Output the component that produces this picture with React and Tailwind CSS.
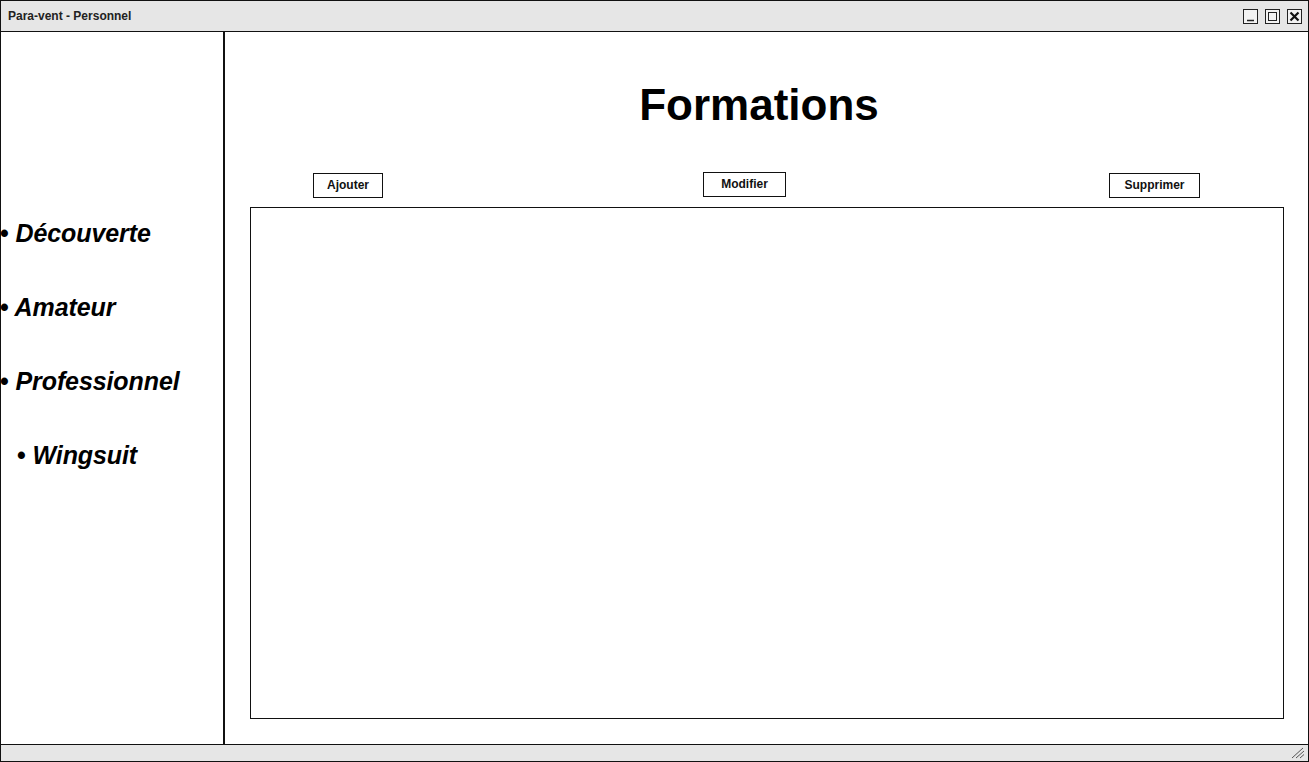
import React from 'react';

const sections = [
    { label: 'Découverte', indent: false },
    { label: 'Amateur', indent: false },
    { label: 'Professionnel', indent: false },
    { label: 'Wingsuit', indent: true },
];

const WinButton = ({ children }) => (
    <div className="w-[15px] h-[15px] border border-[#222] bg-[#f2f2f2] flex items-center justify-center">
        {children}
    </div>
);

const App = () => {
    return (
        <div className="w-[1309px] h-[762px] border border-[#111] bg-white flex flex-col text-black" style={{ fontFamily: '"Liberation Sans", Arial, sans-serif' }}>
            {/* Title bar */}
            <div className="h-[31px] shrink-0 border-b border-[#111] bg-[#e6e6e6] flex items-center justify-between pl-[7px] pr-[6px]">
                <span className="text-[12px] font-bold text-[#222]">Para-vent - Personnel</span>
                <div className="flex items-center gap-[7px]">
                    <WinButton>
                        <svg width="13" height="13" viewBox="0 0 13 13">
                            <path d="M3 10.5h7" stroke="#222" strokeWidth="1.5" />
                        </svg>
                    </WinButton>
                    <WinButton>
                        <svg width="13" height="13" viewBox="0 0 13 13">
                            <rect x="2.5" y="2.5" width="8" height="8" fill="none" stroke="#222" strokeWidth="1" />
                        </svg>
                    </WinButton>
                    <WinButton>
                        <svg width="13" height="13" viewBox="0 0 13 13">
                            <path d="M2.5 2.5l8 8M10.5 2.5l-8 8" stroke="#111" strokeWidth="2.2" />
                        </svg>
                    </WinButton>
                </div>
            </div>

            {/* Body */}
            <div className="flex-1 flex min-h-0">
                {/* Sidebar */}
                <div className="w-[224px] shrink-0 border-r-2 border-[#111] pt-[164px]">
                    {sections.map((s) => (
                        <div
                            key={s.label}
                            className={`text-[25px] leading-[74px] font-bold italic whitespace-nowrap tracking-[-0.1px] ${s.indent ? 'pl-[16px]' : '-ml-px'}`}
                        >
                            <span className="not-italic">•</span> {s.label}
                        </div>
                    ))}
                </div>

                {/* Main content */}
                <div className="flex-1 flex flex-col pl-[25px] pr-[24px] pb-[25px]">
                    <h1 className="pt-[48px] text-[44px] leading-[50px] font-bold text-center pr-[16px]">Formations</h1>
                    <div className="mt-[42px] flex items-start">
                        <button className="ml-[63px] mt-px w-[70px] h-[25px] pb-[2px] border border-[#111] bg-white text-[12px] font-bold text-[#111]">Ajouter</button>
                        <button className="ml-[320px] w-[83px] h-[25px] pb-[2px] border border-[#111] bg-white text-[12px] font-bold text-[#111]">Modifier</button>
                        <button className="ml-[323px] mt-px w-[91px] h-[25px] pb-[2px] border border-[#111] bg-white text-[12px] font-bold text-[#111]">Supprimer</button>
                    </div>
                    <div className="mt-[9px] flex-1 border border-[#111] bg-white"></div>
                </div>
            </div>

            {/* Status bar */}
            <div className="h-[17px] shrink-0 border-t border-[#111] bg-[#e6e6e6] flex items-center justify-end pr-[3px]">
                <svg width="16" height="12" viewBox="0 0 16 12">
                    <path d="M3 11L14 1M7 11L15 4M11 11L15 7.5" stroke="#555" strokeWidth="1" />
                </svg>
            </div>
        </div>
    );
};

export default App;
